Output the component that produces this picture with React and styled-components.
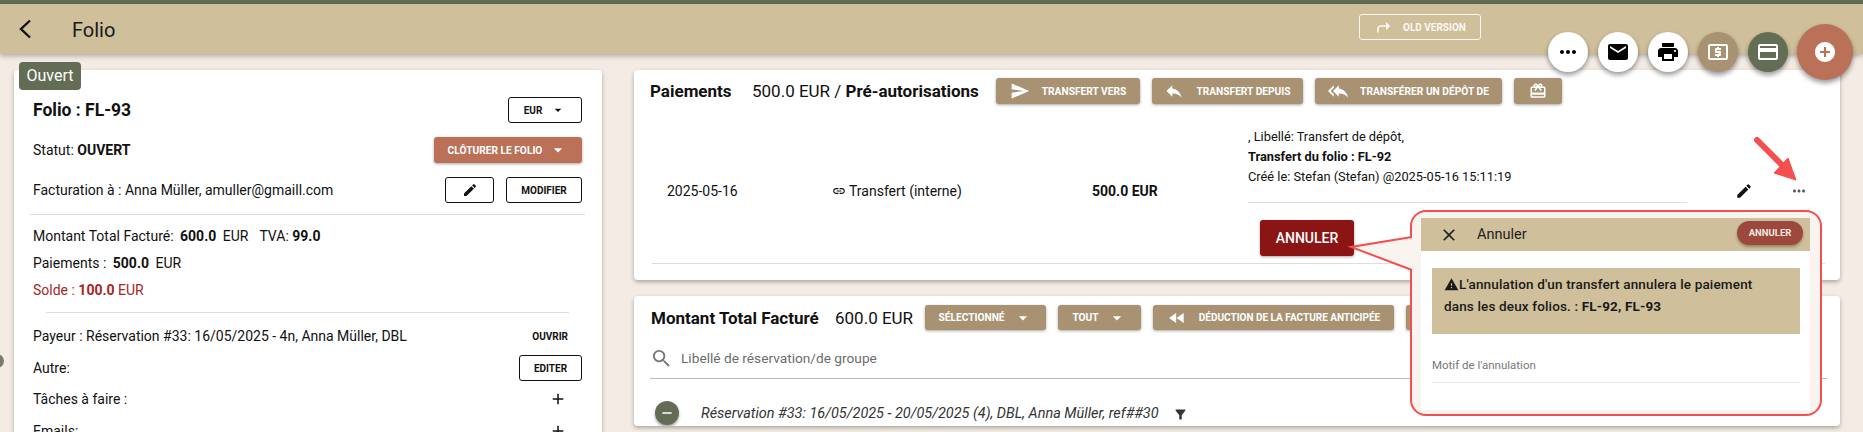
import React from "react";
import styled, { createGlobalStyle } from "styled-components";
import {
  MdMoreHoriz, MdEmail, MdPrint, MdLocalAtm, MdCreditCard, MdAddCircle, MdSend, MdReply, MdReplyAll,
  MdOutlineCardGiftcard, MdFastRewind, MdLink, MdEdit, MdSearch, MdFilterAlt, MdWarning, MdClose,
  MdArrowDropDown, MdAdd, MdRemove,
} from "react-icons/md";

const tan = "#cfbf9b";
const brown = "#a89271";
const green = "#636d56";
const terra = "#bb7058";
const red = "#f44e4e";

const Global = createGlobalStyle`
  html, body { margin: 0; padding: 0; background: #f4ece4; overflow: hidden; }
  * { box-sizing: border-box; }
  body { font-family: Roboto, "Liberation Sans", sans-serif; color: #111; }
`;

const Page = styled.div`
  position: relative;
  width: 1863px;
  height: 432px;
  overflow: hidden;
  background: #f4ece4;
`;
const TopStrip = styled.div`height: 4px; background: ${green};`;
const AppBar = styled.header`
  height: 50px;
  background: ${tan};
  display: flex;
  align-items: flex-start;
  box-shadow: 0 2px 5px rgba(0,0,0,.28);
  position: relative;
  padding-left: 18px;
`;
const BackButton = styled.div`
  width: 14px; height: 50px; display: flex; align-items: center; justify-content: center;
`;
const PageTitle = styled.h1`
  margin: 0 0 0 40px; font-size: 20px; font-weight: 400; line-height: 52px; color: #1a1a1a;
`;
const OldVersion = styled.div`
  position: absolute; left: 1359px; top: 10px;
  width: 122px; height: 26px; border: 1px solid #fff; border-radius: 3px;
  display: flex; align-items: center; color: #fff; opacity: .9;
  font-size: 10px; font-weight: 700; padding-left: 17px; gap: 12px;
`;
const Main = styled.main`
  display: grid;
  grid-template-columns: 588px 1206px;
  column-gap: 32px;
  padding: 16px 0 0 14px;
  align-items: start;
`;
const Card = styled.section`
  position: relative;
  background: #fff;
  border-radius: 4px;
  box-shadow: 0 2px 4px rgba(0,0,0,.3);
`;
const LeftCard = styled(Card)`
  height: 400px;
  padding: 27px 20px 0 19px;
`;
const Badge = styled.div`
  position: absolute; left: 5px; top: -8px; width: 62px; height: 28px;
  background: ${green}; color: #fff; border-radius: 4px;
  font-size: 16px; line-height: 28px; text-align: center;
`;
const Row = styled.div`
  display: flex; align-items: center; justify-content: space-between;
  height: 26px; margin-top: ${p => p.$mt ?? 14}px; font-size: 14px;
`;
const Heading = styled.div`font-size: 17.5px; font-weight: 700;`;
const ButtonGroup = styled.div`display: flex; gap: 12px;`;
const OutlineButton = styled.button`
  width: ${p => p.$w}px; height: 26px; background: #fff; border: 1px solid #111; border-radius: 3px;
  font: 700 10px Roboto, sans-serif; color: #111; padding: 0;
  display: flex; align-items: center; justify-content: center; gap: 8px;
  svg { font-size: ${p => p.$icon || 16}px; }
`;
const TextButton = styled.span`font-size: 10px; font-weight: 700; margin-right: 14px;`;
const FillButton = styled.button`
  width: ${p => p.$w}px; height: ${p => p.$h || 26}px;
  background: ${p => p.$bg || brown}; color: #fff; border: 0; border-radius: 3px; padding: 0;
  font: 700 ${p => p.$font || 10.2}px Roboto, sans-serif; white-space: nowrap;
  box-shadow: 0 1px 3px rgba(0,0,0,.35);
  display: flex; align-items: center; justify-content: center; gap: ${p => p.$gap ?? 12}px;
  flex: none;
  svg { font-size: ${p => p.$icon || 20}px; flex: none; }
`;
const CancelButton = styled(FillButton)`font-size: 14px; font-weight: 500;`;
const Rule = styled.hr`
  border: 0; height: 1px; background: #ddd;
  margin: ${p => p.$m || "0"};
`;
const Totals = styled.div`padding: 8px 0; font-size: 14px; line-height: 27px; height: 97px;`;
const Solde = styled.div`color: #a32727;`;
const Sep = styled.span`margin-left: ${p => p.$w || 3}px;`;

const RightColumn = styled.div`display: flex; flex-direction: column; gap: 16px;`;
const PaymentsCard = styled(Card)`height: 210px; padding: 8px 15px 0 16px;`;
const Toolbar = styled.div`
  display: flex; align-items: center; gap: 12px; height: ${p => p.$h || 26}px;
`;
const ToolbarTitle = styled.div`
  font-size: 17px; margin-right: ${p => p.$mr || 0}px; white-space: nowrap;
  flex: none; width: ${p => p.$w}px;
  b { font-weight: 700; }
`;
const PaymentRow = styled.div`
  display: grid;
  grid-template-columns: 165px 260px 156px 439px 1fr;
  align-items: end;
  margin: 23px 0 0 17px;
  font-size: 14px;
  height: 76px;
`;
const Cell = styled.div`
  line-height: 24px; height: 24px; display: flex; align-items: center; gap: 3px;
  font-weight: ${p => p.$bold ? 700 : 400};
  svg { font-size: 14px; }
`;
const Details = styled.div`
  height: 76px; border-bottom: 1px solid #ddd; font-size: 12.8px; line-height: 20px;
  b { font-weight: 700; }
`;
const Actions = styled.div`
  height: 24px; display: flex; align-items: center; padding-left: 48px; gap: 37px;
  svg.pen { font-size: 18px; }
  svg.dots { font-size: 18px; color: #555; }
`;
const CancelRow = styled.div`display: flex; margin: 17px 0 0 610px;`;
const BottomRule = styled(Rule)`margin: 7px 0 0 2px;`;

const BillingCard = styled(Card)`height: 130px; padding: 9px 0 0 17px; overflow: hidden;`;
const SearchBar = styled.div`
  margin: 15px 13px 0 -1px; height: 26px; padding-bottom: 7px;
  display: flex; align-items: center; gap: 8px; font-size: 13.7px; color: #6c6c6c;
  border-bottom: 1px solid #bbb; box-sizing: content-box;
  svg { font-size: 23px; color: #777; }
`;
const ResRow = styled.div`
  display: flex; align-items: center; height: 24px; margin: 22px 0 0 4px;
  font-size: 14.45px; font-style: italic; color: #333;
`;
const RoundMinus = styled.div`
  width: 24px; height: 24px; border-radius: 50%; background: ${green}; color: #fff; margin-right: 22px;
  display: flex; align-items: center; justify-content: center; font-size: 16px;
  box-shadow: 0 2px 3px rgba(0,0,0,.35);
`;
const FilterIcon = styled(MdFilterAlt)`font-size: 15px; margin: 3px 0 0 14px; color: #333;`;
const ResRule = styled(Rule)`position: absolute; left: 17px; top: 134px; width: 1142px;`;

const Fabs = styled.div`
  position: absolute; left: 1548px; top: 24px; width: 305px; height: 56px;
  display: flex; align-items: center; gap: 10px;
`;
const Fab = styled.div`
  width: ${p => p.$size || 40}px; height: ${p => p.$size || 40}px; border-radius: 50%; flex: none;
  background: ${p => p.$bg || "#fff"}; color: ${p => p.$fg || "#000"};
  display: flex; align-items: center; justify-content: center; font-size: 24px;
  box-shadow: 0 3px 5px rgba(0,0,0,.4);
`;
const BigFab = styled(Fab)`margin-left: -1px;`;

const EdgeDot = styled.div`
  position: absolute; left: -10px; top: 354px; width: 14px; height: 14px; border-radius: 50%; background: #777d6b;
`;
const Pointer = styled.svg`position: absolute; left: 0; top: 0; pointer-events: none;`;

const Popover = styled.div`
  position: absolute; left: 1410px; top: 210px; width: 412px; height: 206px;
  border: 2px solid ${red}; border-radius: 16px; background: #f9f4ef;
  padding: 6px 10px 4px 9px;
`;
const Dialog = styled.div`background: #fff; height: 192px;`;
const DialogHead = styled.div`
  height: 33px; background: ${tan}; display: flex; align-items: center;
  padding: 0 7px 0 18px; font-size: 14px; color: #222;
  svg { font-size: 20px; }
`;
const DialogTitle = styled.span`margin-left: 18px; flex: 1; font-size: 14.5px;`;
const PillButton = styled.button`
  width: 66px; height: 24px; border: 0; border-radius: 12px; background: #9c483c; color: #f3e6e0;
  font: 700 9.5px Roboto, sans-serif; margin-top: -4px; padding: 0;
  box-shadow: 0 2px 3px rgba(0,0,0,.3);
`;
const Warning = styled.div`
  margin: 17px 10px 0 11px; height: 66px; background: ${tan};
  padding: 5px 12px; font-size: 13.5px; font-weight: 500; line-height: 22px; color: #1a1a1a; letter-spacing: .15px;
  svg { font-size: 15px; vertical-align: -3px; }
  b { font-weight: 700; }
`;
const Field = styled.div`
  margin: 20px 10px 0 11px; height: 29px; border-bottom: 1px solid #e8e8e8;
  font-size: 11.5px; line-height: 22px; color: #777;
`;

const ShareIcon = () => (
  <svg width="14" height="12" viewBox="0 0 14 12" fill="none" stroke="#fff">
    <path d="M1 11.5V7.5a2.5 2.5 0 0 1 2.5-2.5H11" strokeWidth="1.6" />
    <path d="M9 .8l4.2 4.2L9 9.2z" fill="#fff" stroke="none" />
  </svg>
);

const BackChevron = () => (
  <svg width="14" height="20" viewBox="0 0 14 20" fill="none" stroke="#111" strokeWidth="2.4">
    <path d="M12 1.5 3 10l9 8.5" />
  </svg>
);

export default function App() {
  return (
    <Page>
      <Global />
      <TopStrip />
      <AppBar>
        <BackButton><BackChevron /></BackButton>
        <PageTitle>Folio</PageTitle>
        <OldVersion><ShareIcon />OLD VERSION</OldVersion>
      </AppBar>
      <EdgeDot />
      <Main>
        <LeftCard>
          <Badge>Ouvert</Badge>
          <Row $mt={0}>
            <Heading>Folio : FL-93</Heading>
            <OutlineButton $w={74}>EUR<MdArrowDropDown /></OutlineButton>
          </Row>
          <Row>
            <span>Statut: <b>OUVERT</b></span>
            <FillButton $w={148} $bg={terra} $gap={6}>CLÔTURER LE FOLIO<MdArrowDropDown /></FillButton>
          </Row>
          <Row>
            <span>Facturation à : Anna Müller, amuller@gmaill.com</span>
            <ButtonGroup>
              <OutlineButton $w={49}><MdEdit /></OutlineButton>
              <OutlineButton $w={76}>MODIFIER</OutlineButton>
            </ButtonGroup>
          </Row>
          <Rule $m="11px -3px 0 -3px" />
          <Totals>
            <div>Montant Total Facturé: <Sep as="b">600.0</Sep> <Sep>EUR</Sep><Sep $w={11}>TVA:</Sep> <b>99.0</b></div>
            <div>Paiements : <Sep as="b">500.0</Sep> <Sep>EUR</Sep></div>
            <Solde>Solde : <b>100.0</b> EUR</Solde>
          </Totals>
          <Rule $m="0 13px" />
          <Row $mt={10}>
            <span>Payeur : Réservation #33: 16/05/2025 - 4n, Anna Müller, DBL</span>
            <TextButton>OUVRIR</TextButton>
          </Row>
          <Row $mt={6}>
            <span>Autre:</span>
            <OutlineButton $w={63}>EDITER</OutlineButton>
          </Row>
          <Row $mt={5}>
            <span>Tâches à faire :</span>
            <MdAdd style={{ fontSize: 18, marginRight: 15 }} />
          </Row>
          <Row $mt={6}>
            <span>Emails:</span>
            <MdAdd style={{ fontSize: 18, marginRight: 15 }} />
          </Row>
        </LeftCard>

        <RightColumn>
          <PaymentsCard>
            <Toolbar>
              <ToolbarTitle $w={90}><b>Paiements</b></ToolbarTitle>
              <ToolbarTitle $w={227} $mr={5}>500.0 EUR / <b>Pré-autorisations</b></ToolbarTitle>
              <FillButton $w={144}><MdSend />TRANSFERT VERS</FillButton>
              <FillButton $w={151}><MdReply />TRANSFERT DEPUIS</FillButton>
              <FillButton $w={187}><MdReplyAll />TRANSFÉRER UN DÉPÔT DE</FillButton>
              <FillButton $w={48} $icon={18}><MdOutlineCardGiftcard /></FillButton>
            </Toolbar>
            <PaymentRow>
              <Cell>2025-05-16</Cell>
              <Cell><MdLink />Transfert (interne)</Cell>
              <Cell $bold>500.0 EUR</Cell>
              <Details>
                <div>, Libellé: Transfert de dépôt,</div>
                <div><b>Transfert du folio : FL-92</b></div>
                <div>Créé le: Stefan (Stefan) @2025-05-16 15:11:19</div>
              </Details>
              <Actions><MdEdit className="pen" /><MdMoreHoriz className="dots" /></Actions>
            </PaymentRow>
            <CancelRow>
              <CancelButton $w={94} $h={36} $bg="#8b1414">ANNULER</CancelButton>
            </CancelRow>
            <BottomRule />
          </PaymentsCard>

          <BillingCard>
            <Toolbar $h={25}>
              <ToolbarTitle $w={172}><b>Montant Total Facturé</b></ToolbarTitle>
              <ToolbarTitle $w={78}>600.0 EUR</ToolbarTitle>
              <FillButton $w={121} $h={25} $gap={8}>SÉLECTIONNÉ<MdArrowDropDown /></FillButton>
              <FillButton $w={83} $h={25} $gap={8}>TOUT<MdArrowDropDown /></FillButton>
              <FillButton $w={241} $h={25} $icon={20} $font={10}><MdFastRewind />DÉDUCTION DE LA FACTURE ANTICIPÉE</FillButton>
              <FillButton $w={90} $h={25} />
            </Toolbar>
            <SearchBar><MdSearch />Libellé de réservation/de groupe</SearchBar>
            <ResRow>
              <RoundMinus><MdRemove /></RoundMinus>
              Réservation #33: 16/05/2025 - 20/05/2025 (4), DBL, Anna Müller, ref##30
              <FilterIcon />
            </ResRow>
            <ResRule />
          </BillingCard>
        </RightColumn>
      </Main>

      <Fabs>
        <Fab><MdMoreHoriz /></Fab>
        <Fab><MdEmail /></Fab>
        <Fab><MdPrint /></Fab>
        <Fab $bg={brown} $fg="#fff"><MdLocalAtm /></Fab>
        <Fab $bg={green} $fg="#fff"><MdCreditCard /></Fab>
        <BigFab $size={56} $bg={terra} $fg="#fff"><MdAddCircle /></BigFab>
      </Fabs>

      <Pointer width="1863" height="432">
        <path d="M1757 140 L1783 166" stroke={red} strokeWidth="6" strokeLinecap="round" />
        <path d="M1788 158 L1796 180 L1774 173 Z" fill={red} stroke={red} strokeLinejoin="round" />
      </Pointer>
      <Popover>
        <Dialog>
          <DialogHead>
            <MdClose /><DialogTitle>Annuler</DialogTitle>
            <PillButton>ANNULER</PillButton>
          </DialogHead>
          <Warning>
            <MdWarning />L'annulation d'un transfert annulera le paiement<br />
            dans les deux folios. : <b>FL-92, FL-93</b>
          </Warning>
          <Field>Motif de l'annulation</Field>
        </Dialog>
      </Popover>
      <Pointer width="1863" height="432">
        <path d="M1412 237 L1351 247 L1412 270" fill="#f9f4ef" stroke={red} strokeWidth="2" />
      </Pointer>
    </Page>
  );
}
